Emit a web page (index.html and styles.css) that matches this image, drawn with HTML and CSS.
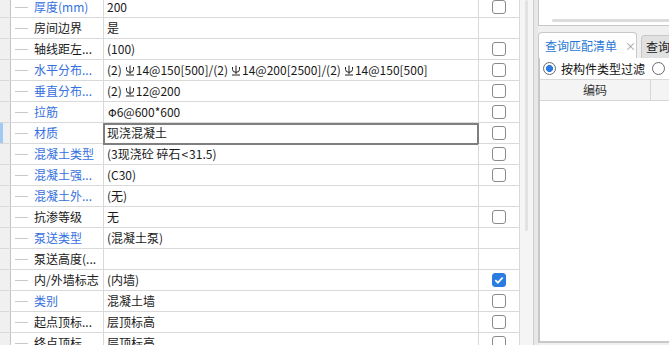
FILE: index.html
```html
<!DOCTYPE html>
<html lang="zh">
<head>
<meta charset="utf-8">
<title>属性编辑</title>
<link rel="stylesheet" href="styles.css">
</head>
<body>
<div class="app">
  <div class="prop-pane">
    <div class="grid">
      <div class="row"><div class="rh"></div><div class="name blue"><span class="tree"></span>厚度(mm)</div><div class="val">200</div><div class="chk"><span class="cb"></span></div></div>
      <div class="row"><div class="rh"></div><div class="name"><span class="tree"></span>房间边界</div><div class="val">是</div><div class="chk"></div></div>
      <div class="row"><div class="rh"></div><div class="name"><span class="tree"></span>轴线距左...</div><div class="val">(100)</div><div class="chk"><span class="cb"></span></div></div>
      <div class="row"><div class="rh"></div><div class="name blue"><span class="tree"></span>水平分布...</div><div class="val">(2)<svg class="bar3" viewBox="0 0 10 11" width="10" height="11"><path d="M5 0.5V9M1.5 2V4.5Q1.5 7.3 5 7.3Q8.5 7.3 8.5 4.5V2M1 10H9" fill="none" stroke="#222" stroke-width="1"/></svg>14@150[500]/(2)<svg class="bar3" viewBox="0 0 10 11" width="10" height="11"><path d="M5 0.5V9M1.5 2V4.5Q1.5 7.3 5 7.3Q8.5 7.3 8.5 4.5V2M1 10H9" fill="none" stroke="#222" stroke-width="1"/></svg>14@200[2500]/(2)<svg class="bar3" viewBox="0 0 10 11" width="10" height="11"><path d="M5 0.5V9M1.5 2V4.5Q1.5 7.3 5 7.3Q8.5 7.3 8.5 4.5V2M1 10H9" fill="none" stroke="#222" stroke-width="1"/></svg>14@150[500]</div><div class="chk"><span class="cb"></span></div></div>
      <div class="row"><div class="rh"></div><div class="name blue"><span class="tree"></span>垂直分布...</div><div class="val">(2)<svg class="bar3" viewBox="0 0 10 11" width="10" height="11"><path d="M5 0.5V9M1.5 2V4.5Q1.5 7.3 5 7.3Q8.5 7.3 8.5 4.5V2M1 10H9" fill="none" stroke="#222" stroke-width="1"/></svg>12@200</div><div class="chk"><span class="cb"></span></div></div>
      <div class="row"><div class="rh"></div><div class="name blue"><span class="tree"></span>拉筋</div><div class="val"><span class="phi">Φ</span>6@600*600</div><div class="chk"><span class="cb"></span></div></div>
      <div class="row sel"><div class="rh"></div><div class="name blue"><span class="tree"></span>材质</div><div class="val editing">现浇混凝土</div><div class="chk"><span class="cb"></span></div></div>
      <div class="row"><div class="rh"></div><div class="name blue"><span class="tree"></span>混凝土类型</div><div class="val">(3现浇砼 碎石<span class="lt">&lt;</span>31.5)</div><div class="chk"><span class="cb"></span></div></div>
      <div class="row"><div class="rh"></div><div class="name blue"><span class="tree"></span>混凝土强...</div><div class="val">(C30)</div><div class="chk"><span class="cb"></span></div></div>
      <div class="row"><div class="rh"></div><div class="name blue"><span class="tree"></span>混凝土外...</div><div class="val">(无)</div><div class="chk"></div></div>
      <div class="row"><div class="rh"></div><div class="name"><span class="tree"></span>抗渗等级</div><div class="val">无</div><div class="chk"><span class="cb"></span></div></div>
      <div class="row"><div class="rh"></div><div class="name blue"><span class="tree"></span>泵送类型</div><div class="val">(混凝土泵)</div><div class="chk"></div></div>
      <div class="row"><div class="rh"></div><div class="name"><span class="tree"></span>泵送高度(...</div><div class="val"></div><div class="chk"></div></div>
      <div class="row"><div class="rh"></div><div class="name"><span class="tree"></span>内/外墙标志</div><div class="val">(内墙)</div><div class="chk"><span class="cb on"><svg viewBox="0 0 14 14" width="14" height="14"><path d="M3.3 7.2l2.6 2.5 4.8-5.2" fill="none" stroke="#fff" stroke-width="1.8"/></svg></span></div></div>
      <div class="row"><div class="rh"></div><div class="name blue"><span class="tree"></span>类别</div><div class="val">混凝土墙</div><div class="chk"><span class="cb"></span></div></div>
      <div class="row"><div class="rh"></div><div class="name"><span class="tree"></span>起点顶标...</div><div class="val">层顶标高</div><div class="chk"><span class="cb"></span></div></div>
      <div class="row"><div class="rh"></div><div class="name"><span class="tree"></span>终点顶标...</div><div class="val">层顶标高</div><div class="chk"><span class="cb"></span></div></div>
    </div>
  </div>
  <div class="vscroll"><div class="thumb"></div></div>
  <div class="splitter"></div>
  <div class="side">
    <div class="topbox"><div class="hthumb"></div></div>
    <div class="tabs">
      <div class="tab active">查询匹配清单<span class="x">×</span></div>
      <div class="tab">查询</div>
    </div>
    <div class="content">
      <div class="radios"><span class="radio on"></span><span class="rlabel">按构件类型过滤</span><span class="radio"></span></div>
      <div class="thead"><div class="th code">编码</div><div class="th"></div></div>
      <div class="tbody"></div>
    </div>
  </div>
</div>
</body>
</html>
```

FILE: styles.css
```css
html, body {
  margin: 0;
  padding: 0;
}
body {
  width: 669px;
  height: 345px;
  overflow: hidden;
  background: #f0f0f0;
  font-family: "Noto Sans CJK SC", "Noto Sans", sans-serif;
  font-size: 12px;
  color: #1a1a1a;
}
.app {
  display: flex;
  height: 345px;
}
.prop-pane {
  width: 520px;
  flex: none;
  background: #fff;
  overflow: hidden;
}
.grid {
  margin-top: -3px;
}
.row {
  display: flex;
  height: 21px;
  box-sizing: border-box;
  border-bottom: 1px solid #d9d9d9;
  line-height: 20px;
}
.rh {
  width: 11px;
  flex: none;
  box-sizing: border-box;
  border-right: 1px solid #c4c4c4;
  background: #f0f0f0;
}
.row.sel .rh {
  background: linear-gradient(to right, #9fcaf2 0 3px, #f0f0f0 3px);
}
.name {
  width: 93px;
  flex: none;
  box-sizing: border-box;
  border-right: 1px solid #d9d9d9;
  display: flex;
  align-items: center;
  padding-left: 4px;
  white-space: nowrap;
  overflow: hidden;
}
.name.blue {
  color: #3570e0;
}
.tree {
  width: 13px;
  height: 1px;
  background: #c9c9c9;
  margin-right: 6px;
  flex: none;
}
.val {
  width: 375px;
  flex: none;
  box-sizing: border-box;
  border-right: 1px solid #d9d9d9;
  padding-left: 3px;
  white-space: nowrap;
  overflow: hidden;
  position: relative;
}
.val.editing {
  overflow: visible;
}
.val.editing::after {
  content: "";
  position: absolute;
  top: 0;
  left: -1px;
  right: -1px;
  bottom: -2px;
  border: 2px solid #7f7f7f;
}
.bar3 {
  vertical-align: -1px;
  margin: 0 1px 0 3px;
}
.lt {
  margin: 0 1px;
}
.phi {
  font-family: "DejaVu Sans", sans-serif;
  font-size: 11px;
  margin-left: 1px;
}
.chk {
  width: 41px;
  flex: none;
  box-sizing: border-box;
  border-right: 1px solid #d9d9d9;
  display: flex;
  align-items: center;
  justify-content: center;
}
.cb {
  width: 14px;
  height: 14px;
  box-sizing: border-box;
  border: 1px solid #8a8a8a;
  border-radius: 3px;
  background: #fff;
  display: block;
}
.cb.on {
  background: #2b7ce0;
  border-color: #2b7ce0;
}
.cb.on svg {
  display: block;
  margin: -1px;
}
.vscroll {
  width: 14px;
  flex: none;
  box-sizing: border-box;
  background: #f5f5f5;
  border-right: 1px solid #cdcdcd;
}
.thumb {
  width: 3px;
  height: 231px;
  margin-left: 5px;
  border-radius: 2px;
  background: #e2e2e2;
}
.splitter {
  width: 4px;
  flex: none;
  background: #e8e8e8;
}
.side {
  flex: 1;
  min-width: 0;
  display: flex;
  flex-direction: column;
  background: #f0f0f0;
}
.topbox {
  height: 26px;
  flex: none;
  box-sizing: border-box;
  background: #fff;
  border-left: 1px solid #c8c8c8;
  border-bottom: 1px solid #c8c8c8;
  padding: 19px 0 0 13px;
}
.hthumb {
  height: 3px;
  border-radius: 2px 0 0 2px;
  background: #dcdcdc;
}
.tabs {
  margin-top: 6px;
  height: 26px;
  flex: none;
  display: flex;
  align-items: flex-end;
  white-space: nowrap;
}
.tab {
  box-sizing: border-box;
  border: 1px solid #c8c8c8;
  border-bottom: none;
  border-radius: 4px 4px 0 0;
  flex: none;
}
.tab.active {
  width: 99px;
  height: 26px;
  background: #fff;
  color: #2a78d6;
  padding-left: 6px;
  line-height: 24px;
  display: flex;
  align-items: center;
}
.x {
  color: #9a9a9a;
  font-size: 11px;
  margin-left: 8px;
}
.tab:not(.active) {
  margin-left: 4px;
  height: 23px;
  background: #e1e1e1;
  padding-left: 4px;
  padding-right: 10px;
  line-height: 22px;
  color: #222;
}
.content {
  flex: 1;
  display: flex;
  flex-direction: column;
  background: #fff;
  border-left: 2px solid #c8c8c8;
  border-bottom: 2px solid #c8c8c8;
  margin-bottom: 2px;
}
.radios {
  height: 22px;
  flex: none;
  box-sizing: border-box;
  border-bottom: 1px solid #d9d9d9;
  display: flex;
  align-items: center;
  padding-left: 3px;
  white-space: nowrap;
}
.radio {
  width: 13px;
  height: 13px;
  box-sizing: border-box;
  border: 1px solid #6a6a6a;
  border-radius: 50%;
  background: #fff;
  flex: none;
}
.radio.on {
  background: radial-gradient(circle, #2b7ce0 0 3.2px, #fff 3.8px);
}
.rlabel {
  margin: 0 7px 0 5px;
  color: #111;
}
.thead {
  height: 21px;
  flex: none;
  box-sizing: border-box;
  display: flex;
  background: #f4f4f4;
  border-bottom: 1px solid #d6d6d6;
}
.th {
  line-height: 20px;
  color: #333;
  flex: 1;
}
.th.code {
  width: 111px;
  flex: none;
  box-sizing: border-box;
  border-right: 1px solid #d6d6d6;
  text-align: center;
}
.tbody {
  flex: 1;
}
```
